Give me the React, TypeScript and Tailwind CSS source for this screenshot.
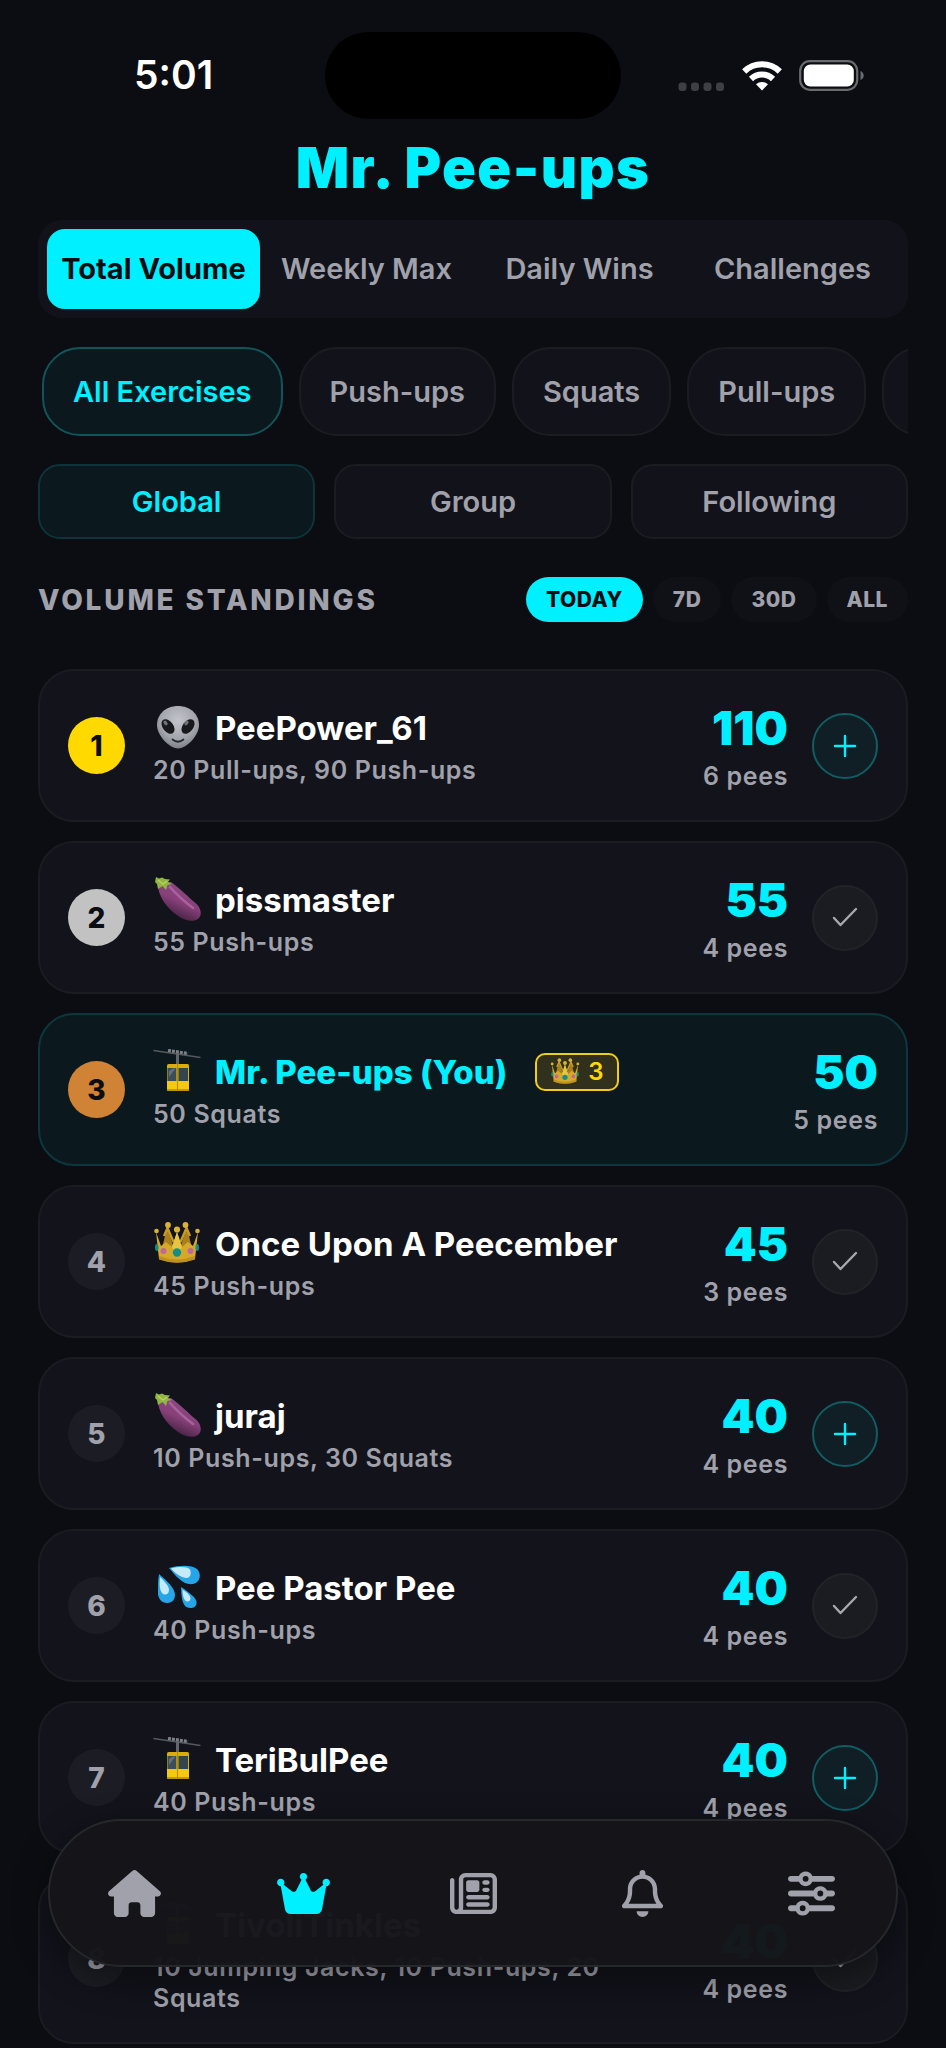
import type { ReactNode } from "react";
import { FaHouse, FaCrown, FaRegNewspaper, FaRegBell, FaSliders } from "react-icons/fa6";

type IconKind = "alien" | "eggplant" | "gondola" | "crown" | "drops";

function Alien() {
  return (
    <svg viewBox="0 0 48 48" className="size-12 shrink-0" aria-hidden="true">
      <defs>
        <radialGradient id="alienSkin" cx="50%" cy="35%" r="65%">
          <stop offset="0" stopColor="#c3c5cb" />
          <stop offset="0.65" stopColor="#a3a5ac" />
          <stop offset="1" stopColor="#7e8087" />
        </radialGradient>
      </defs>
      <path d="M25 2C12.500 2 4 10.500 4 21c0 11 13 23.500 21 23.500S46 32 46 21C46 10.500 37.500 2 25 2z" fill="url(#alienSkin)" />
      <ellipse cx="15" cy="22.500" rx="5.200" ry="8.300" transform="rotate(-38 15 22.500)" fill="#17191d" />
      <ellipse cx="35" cy="22.500" rx="5.200" ry="8.300" transform="rotate(38 35 22.500)" fill="#17191d" />
      <ellipse cx="12.500" cy="19" rx="1.800" ry="2.600" transform="rotate(-38 12.500 19)" fill="#6d7178" />
      <ellipse cx="33.500" cy="19" rx="1.800" ry="2.600" transform="rotate(38 33.500 19)" fill="#6d7178" />
      <path d="M19.500 35.500q5.500 4.500 11 0" fill="none" stroke="#24262a" strokeWidth="1.700" strokeLinecap="round" />
    </svg>
  );
}

function Eggplant() {
  return (
    <svg viewBox="0 0 48 48" className="size-12 shrink-0" aria-hidden="true">
      <defs>
        <linearGradient id="eggplantSkin" x1="0.7" y1="0.1" x2="0.3" y2="0.9">
          <stop offset="0" stopColor="#8d4a83" />
          <stop offset="0.5" stopColor="#874079" />
          <stop offset="1" stopColor="#41203f" />
        </linearGradient>
      </defs>
      <path d="M5 8C5 19 12 31 25 40c7 5 16 6.500 20.500 2.500 4-3.500 2.500-11-3-15.500C35 21 28 13 18 6z" fill="url(#eggplantSkin)" />
      <path d="M17 11c7 8 15 15 23 21" fill="none" stroke="#b670a9" strokeWidth="2.600" strokeLinecap="round" opacity="0.7" />
      <path d="M3 1L6 2.500 9 1.500l3 1.500 5 .500-2 2.500 4 2-4.500 1-1.500 5-3.500-4L5 13 4 8 2 6z" fill="#91b443" />
      <path d="M5 4l5 4 4-3" fill="none" stroke="#b4d25e" strokeWidth="1.500" />
    </svg>
  );
}

function Gondola() {
  return (
    <svg viewBox="0 0 48 48" className="size-12 shrink-0" aria-hidden="true">
      <path d="M0.500 2.500L47.500 9.500" stroke="#55595d" strokeWidth="1.700" />
      <path d="M15 2.500l20 3" stroke="#7b8084" strokeWidth="3.200" strokeDasharray="3 1" />
      <path d="M24.500 5v12" stroke="#63676a" strokeWidth="3" />
      <rect x="14" y="16" width="22" height="27" rx="1.500" fill="#d9ae0c" />
      <rect x="14.500" y="20" width="8.800" height="13" fill="#3c4d54" />
      <rect x="25.500" y="20" width="9.500" height="13" fill="#34454c" />
      <path d="M16 23l4-2.500h2.500L16 29z" fill="#70828a" opacity="0.7" />
      <rect x="14" y="33" width="22" height="8.500" fill="#f4ca10" />
      <path d="M24.500 16v27" stroke="#b28c08" strokeWidth="1" />
      <path d="M14 42h22" stroke="#b8920f" strokeWidth="1.600" />
    </svg>
  );
}

function Crown({ small = false }: { small?: boolean }) {
  return (
    <svg viewBox="0 0 48 48" className={small ? "size-[30px] shrink-0" : "size-12 shrink-0"} aria-hidden="true">
      <path d="M14 8l7 20H9zM34 8l-7 20h12z" fill="#a9801d" />
      <path d="M11 16l3.500-8 6 14M37 16l-3.500-8-6 14" fill="none" stroke="#c79b25" strokeWidth="2.400" />
      <path d="M3 12l5 14 5-4 6 5 5-15 5 15 6-5 5 4 5-14-3 27Q24 46 6 39z" fill="#d5aa2b" />
      <path d="M24 12l5 15-5 9-5-9z" fill="#e7c443" />
      <path d="M6 36q18 7 36 0v3.500q-18 6.500-36 0z" fill="#bd9020" />
      <g fill="#d9b238">
        <circle cx="15" cy="5" r="2.900" />
        <circle cx="32.500" cy="5" r="2.900" />
        <circle cx="3.500" cy="11" r="2.300" />
        <circle cx="44.500" cy="11" r="2.300" />
        <circle cx="24" cy="9.500" r="3.100" />
      </g>
      <circle cx="24" cy="32.500" r="4.200" fill="#158f85" />
      <circle cx="10.500" cy="31" r="3" fill="#c1679b" />
      <circle cx="37.500" cy="31" r="3" fill="#c1679b" />
      <ellipse cx="3.800" cy="27.500" rx="1.800" ry="3.500" fill="#168b84" />
      <ellipse cx="44.200" cy="27.500" rx="1.800" ry="3.500" fill="#168b84" />
    </svg>
  );
}

function Drops() {
  return (
    <svg viewBox="0 0 48 48" className="size-12 shrink-0" aria-hidden="true">
      <g fill="#26a5e8">
        <path d="M16 4C27 1 38 .500 44 5c5 4.500 3 14-4 15C30 21.500 23 12 16 4z" />
        <path d="M6 10c8 7 16 14 16 21 0 5-3.500 8-8 8-5 0-9-4-9-10C5 22 5 16 6 10z" />
        <path d="M28 23c6 4 15 10 15.500 15 .300 4-2.500 6-6 6C29 44 28.500 33 28 23z" />
      </g>
      <g fill="#c5eafa">
        <path d="M18 4.500c8-2 16-2 19 1 2 4 0 9-4 8.500C27 13 22 9 18 4.500z" />
        <path d="M7 13c5 5 9 9 9 13 0 3-2 4.500-4 4.500-5 0-6-8-5-17.500z" />
        <path d="M29.500 25.500c5 3.500 8 6 8 9 0 2-1.500 3-3 3-3.500 0-5-6-5-12z" />
      </g>
    </svg>
  );
}

function Avatar({ kind }: { kind: IconKind }) {
  if (kind === "alien") return <Alien />;
  if (kind === "eggplant") return <Eggplant />;
  if (kind === "gondola") return <Gondola />;
  if (kind === "crown") return <Crown />;
  return <Drops />;
}

type Entry = {
  rank: number;
  icon: IconKind;
  name: string;
  detail: string;
  total: number;
  pees: number;
  follow: "add" | "following" | "self";
};

const entries: Entry[] = [
  { rank: 1, icon: "alien", name: "PeePower_61", detail: "20 Pull-ups, 90 Push-ups", total: 110, pees: 6, follow: "add" },
  { rank: 2, icon: "eggplant", name: "pissmaster", detail: "55 Push-ups", total: 55, pees: 4, follow: "following" },
  { rank: 3, icon: "gondola", name: "Mr. Pee-ups (You)", detail: "50 Squats", total: 50, pees: 5, follow: "self" },
  { rank: 4, icon: "crown", name: "Once Upon A Peecember", detail: "45 Push-ups", total: 45, pees: 3, follow: "following" },
  { rank: 5, icon: "eggplant", name: "juraj", detail: "10 Push-ups, 30 Squats", total: 40, pees: 4, follow: "add" },
  { rank: 6, icon: "drops", name: "Pee Pastor Pee", detail: "40 Push-ups", total: 40, pees: 4, follow: "following" },
  { rank: 7, icon: "gondola", name: "TeriBulPee", detail: "40 Push-ups", total: 40, pees: 4, follow: "add" },
  { rank: 8, icon: "gondola", name: "TivoliTinkles", detail: "10 Jumping Jacks, 10 Push-ups, 20 Squats", total: 40, pees: 4, follow: "following" },
];

const rankStyle: Record<number, string> = {
  1: "bg-[#ffd900] text-[#0c0d12]",
  2: "bg-[#c2c2c3] text-[#0c0d12]",
  3: "bg-[#d08235] text-[#0c0d12]",
};

function StatusBar() {
  return (
    <div className="grid h-[119px] grid-cols-[1fr_296px_1fr] items-end">
      <div className="flex h-[87px] items-center pl-[134px] text-[39px] font-semibold text-white">5:01</div>
      <div className="h-[87px] rounded-full bg-black" />
      <div className="flex h-[87px] items-center justify-end gap-[17px] pr-[82px]">
        <svg viewBox="0 0 47 30" className="h-[30px] w-[47px]" aria-hidden="true">
          <g fill="#3e3f43">
            <rect x="0.500" y="21.500" width="8" height="8.500" rx="3.200" />
            <rect x="13" y="21.500" width="8" height="8.500" rx="3.200" />
            <rect x="25.500" y="21.500" width="8" height="8.500" rx="3.200" />
            <rect x="38" y="21.500" width="8" height="8.500" rx="3.200" />
          </g>
        </svg>
        <svg viewBox="0 0 40 30" className="h-[30px] w-[40px]" aria-hidden="true">
          <g fill="none" stroke="#fff" strokeWidth="6">
            <path d="M2.200 10.500a25.500 25.500 0 0 1 35.600 0" />
            <path d="M9 18a16 16 0 0 1 22 0" />
          </g>
          <path d="M20 29.500l-6-6.200a8.800 8.800 0 0 1 12 0z" fill="#fff" />
        </svg>
        <svg viewBox="0 0 65 31" className="h-[31px] w-[65px]" aria-hidden="true">
          <rect x="1.200" y="1.200" width="57" height="28.600" rx="9.500" fill="none" stroke="#6a6b6e" strokeWidth="2.200" />
          <rect x="4.800" y="4.500" width="50" height="22" rx="6.500" fill="#fff" />
          <path d="M61.500 11q3.200 1.500 3.200 4.500t-3.200 4.500z" fill="#6a6b6e" />
        </svg>
      </div>
    </div>
  );
}

function Chip({ children, active = false }: { children: ReactNode; active?: boolean }) {
  return (
    <button
      type="button"
      className={
        "h-[89px] shrink-0 rounded-[38px] border-2 px-[29px] text-[29px] font-semibold " +
        (active ? "border-[#115459] bg-[#0b181e] text-[#00f0ff]" : "border-[#1b1c21] bg-[#12131a] text-[#a0a1aa]")
      }
    >
      {children}
    </button>
  );
}

function Scope({ children, active = false }: { children: ReactNode; active?: boolean }) {
  return (
    <button
      type="button"
      className={
        "h-[75px] rounded-[22px] border-2 text-[29px] font-semibold " +
        (active ? "border-[#0e3339] bg-[#0b181e] text-[#00f0ff]" : "border-[#1b1c21] bg-[#12131a] text-[#a0a1aa]")
      }
    >
      {children}
    </button>
  );
}

function Row({ entry }: { entry: Entry }) {
  const self = entry.follow === "self";
  return (
    <li
      className={
        "flex items-center rounded-[36px] border-2 p-7 " +
        (self ? "border-[#0d373d] bg-[#0b181e]" : "border-[#1b1c22] bg-[#12131b]")
      }
    >
      <span
        className={
          "flex size-[57px] shrink-0 items-center justify-center rounded-full text-[28px] font-extrabold " +
          (rankStyle[entry.rank] ?? "bg-[#1c1d24] text-[#a0a1aa]")
        }
      >
        {entry.rank}
      </span>
      <div className="ml-7 min-w-0 flex-1">
        <div className="flex h-11 items-center">
          <Avatar kind={entry.icon} />
          <span
            className={
              "ml-3.5 whitespace-nowrap text-[33px] leading-[46px] " +
              (self ? "font-extrabold text-[#00f0ff]" : "font-bold text-white")
            }
          >
            {entry.name}
          </span>
          {self && (
            <span className="ml-7 flex h-[38px] items-center gap-2 rounded-[10px] border-2 border-[#f1cd16] bg-[#31301c] px-[13px] text-[24px] font-semibold text-[#ffd900]">
              <Crown small />3
            </span>
          )}
        </div>
        <p className="mt-[5px] text-[25px] leading-[31px] font-semibold tracking-wide text-[#a0a1aa]">{entry.detail}</p>
      </div>
      <div className="ml-6 flex shrink-0 flex-col items-end">
        <span className="text-[47px] leading-[58px] font-black text-[#00f0ff]">{entry.total}</span>
        <span className="mt-1 text-[25px] leading-[31px] font-semibold tracking-wide text-[#a0a1aa]">{entry.pees} pees</span>
      </div>
      {!self && (
        <button
          type="button"
          aria-label={entry.follow === "add" ? "Follow " + entry.name : "Unfollow " + entry.name}
          className={
            "ml-6 flex size-[66px] shrink-0 items-center justify-center rounded-full border-2 " +
            (entry.follow === "add" ? "border-[#105d62] bg-[#101e26]" : "border-[#222328] bg-[#1b1c21]")
          }
        >
          <svg viewBox="0 0 26 26" className="size-[26px]" fill="none" strokeWidth="2.400" strokeLinecap="round" strokeLinejoin="round" aria-hidden="true">
            {entry.follow === "add" ? (
              <path d="M13 3v20M3 13h20" stroke="#00f0ff" />
            ) : (
              <path d="M2 13l6.500 7L24 4" stroke="#a8a9b0" />
            )}
          </svg>
        </button>
      )}
    </li>
  );
}

const navItem = "flex flex-1 items-center justify-center";

export default function App() {
  return (
    <div className="relative h-screen overflow-hidden bg-[#0c0d12] font-['Inter',sans-serif]">
      <StatusBar />
      <main className="px-[38px]">
        <h1 className="h-[101px] text-center text-[56px] leading-[98px] font-black tracking-wide text-[#00f0ff]">Mr. Pee-ups</h1>

        <nav className="grid h-[98px] grid-cols-4 rounded-[24px] bg-[#12131a] p-[9px] text-[29px] font-semibold text-[#a0a1aa]">
          <button type="button" className="rounded-[18px] bg-[#00f0ff] font-bold whitespace-nowrap text-[#0c0d12]">Total Volume</button>
          <button type="button">Weekly Max</button>
          <button type="button">Daily Wins</button>
          <button type="button">Challenges</button>
        </nav>

        <div className="mt-[29px] flex gap-4 overflow-hidden pl-1">
          <Chip active>All Exercises</Chip>
          <Chip>Push-ups</Chip>
          <Chip>Squats</Chip>
          <Chip>Pull-ups</Chip>
          <Chip>Jumping Jacks</Chip>
        </div>

        <div className="mt-7 grid grid-cols-3 gap-[19px]">
          <Scope active>Global</Scope>
          <Scope>Group</Scope>
          <Scope>Following</Scope>
        </div>

        <div className="mt-[38px] flex h-[45px] items-center justify-between">
          <h2 className="text-[28px] font-extrabold tracking-widest text-[#a0a1aa]">VOLUME STANDINGS</h2>
          <div className="flex gap-2.5 text-[21px] font-extrabold tracking-wide text-[#a0a1aa]">
            <button type="button" className="h-[45px] rounded-full bg-[#00f0ff] px-5 text-[#0c0d12]">TODAY</button>
            <button type="button" className="h-[45px] rounded-full bg-[#101117] px-5">7D</button>
            <button type="button" className="h-[45px] rounded-full bg-[#101117] px-5">30D</button>
            <button type="button" className="h-[45px] rounded-full bg-[#101117] px-5">ALL</button>
          </div>
        </div>

        <ol className="mt-[47px] flex flex-col gap-[19px]">
          {entries.map((entry) => (
            <Row key={entry.rank} entry={entry} />
          ))}
        </ol>
      </main>

      <nav className="absolute inset-x-12 bottom-[81px] flex h-[148px] rounded-full border-2 border-[#26272b] bg-[#141419]/98 text-[#a0a1aa] shadow-[0_12px_36px_rgba(0,0,0,0.4)]">
        <a href="#home" aria-label="Home" className={navItem}><FaHouse className="h-[47px] w-[53px]" /></a>
        <a href="#standings" aria-label="Standings" className={navItem + " text-[#00f0ff]"}><FaCrown className="h-[47px] w-[53px]" /></a>
        <a href="#news" aria-label="News" className={navItem}><FaRegNewspaper className="size-[47px]" /></a>
        <a href="#alerts" aria-label="Alerts" className={navItem}><FaRegBell className="size-[47px]" /></a>
        <a href="#settings" aria-label="Settings" className={navItem}><FaSliders className="size-[47px]" /></a>
      </nav>
    </div>
  );
}
